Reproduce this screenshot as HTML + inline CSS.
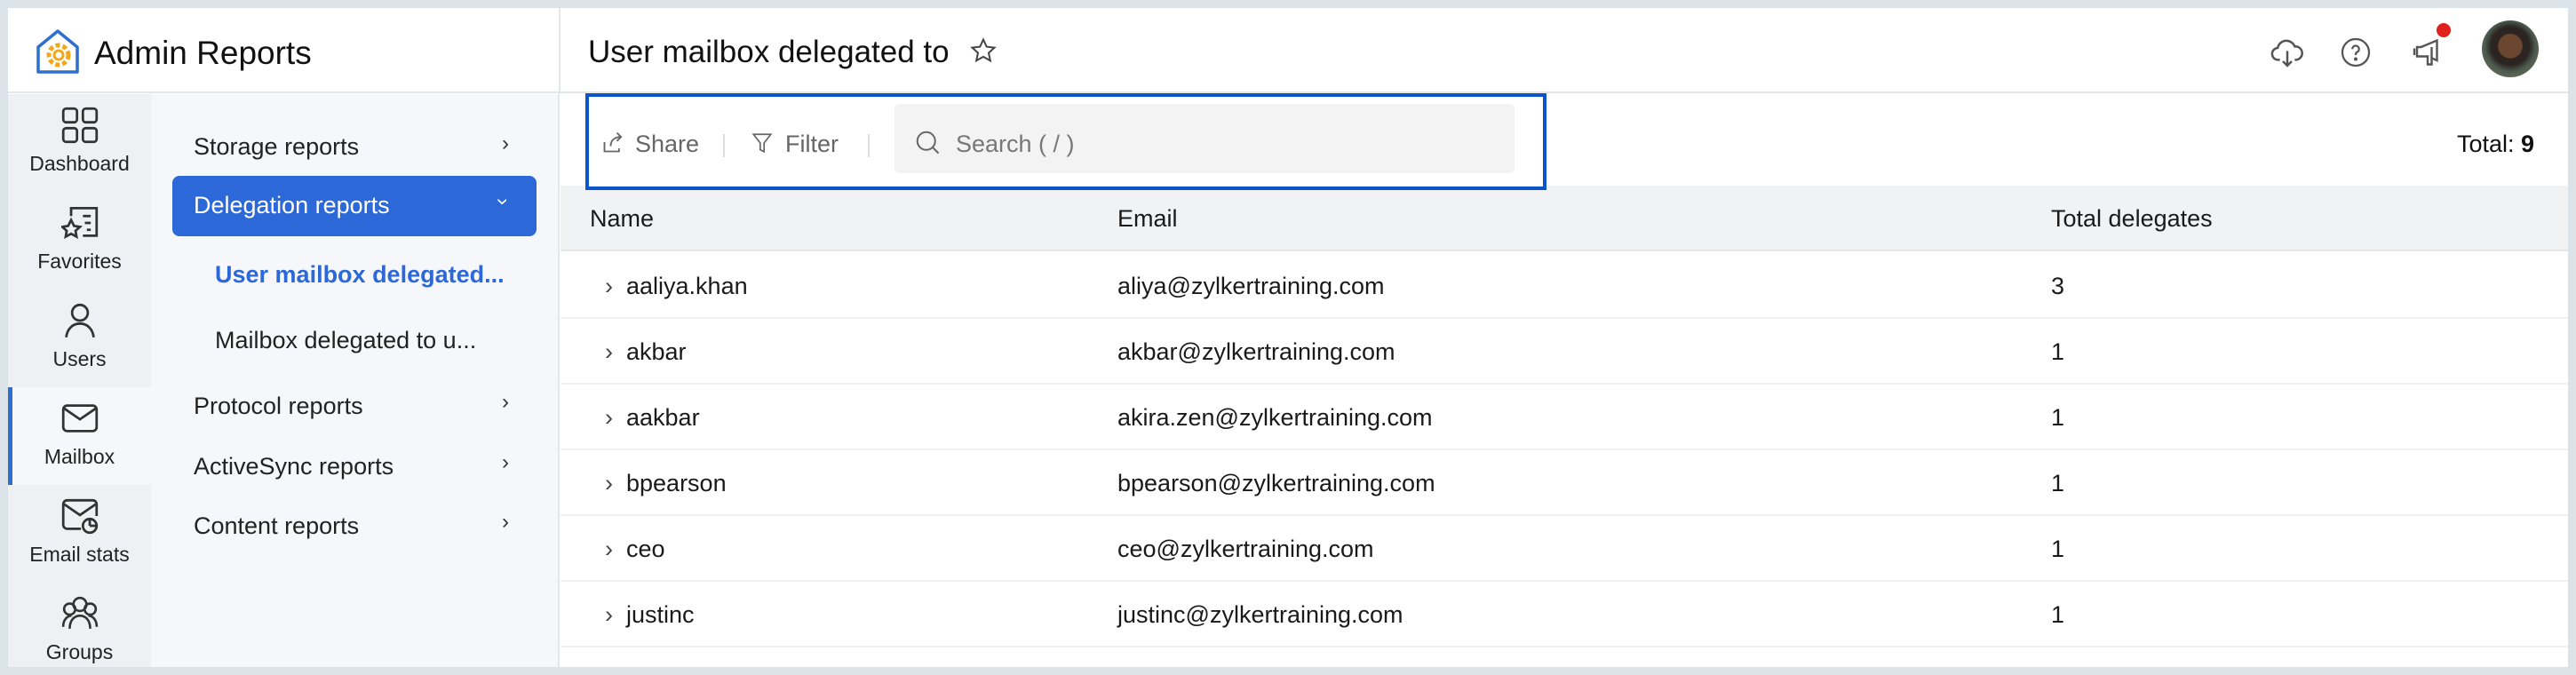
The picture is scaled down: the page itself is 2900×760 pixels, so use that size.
<!DOCTYPE html>
<html><head><meta charset="utf-8"><style>
*{box-sizing:border-box;margin:0;padding:0}
body{width:2900px;height:760px;background:#dce3e8;font-family:"Liberation Sans",sans-serif;color:#1a1a1a;position:relative;overflow:hidden}
.app{position:absolute;left:9px;top:9px;width:2882px;height:742px;background:#fff;overflow:hidden}
.abs{position:absolute}
.hdr{left:0;top:0;width:2882px;height:96px;border-bottom:2px solid #e4e6ea;background:#fff}
.rail{left:0;top:97px;width:161px;height:660px;background:#eef0f3}
.sub{left:161px;top:97px;width:460px;height:660px;background:#f5f7fa;border-right:2px solid #e4e6ea}
.vdiv{left:620px;top:0;width:2px;height:97px;background:#e4e6ea}
.ri{position:absolute;left:0;width:161px;height:110px;text-align:center;font-size:23px;color:#222}
.ri svg{position:absolute;left:60px;top:14px}
.ri span{position:absolute;left:0;right:0;top:65px}
.si{position:absolute;left:48px;font-size:27px;color:#222}
.chev{position:absolute;left:395px;font-size:24px;color:#333}
.row{position:absolute;left:622px;width:2260px;height:74px;border-bottom:2px solid #f0f1f3;font-size:27px}
.row div{position:absolute;top:22px}
</style></head><body>
<div class="app">
<div class="abs hdr"></div>
<div class="abs vdiv"></div>
<svg class="abs" style="left:30px;top:22px" width="52" height="56" viewBox="0 0 52 56"><path d="M4 22 L26 4 L48 22 V50 H4 Z" fill="none" stroke="#2f6fd0" stroke-width="3.5" stroke-linejoin="round"/><circle cx="27" cy="31" r="11" fill="none" stroke="#f2a81d" stroke-width="5" stroke-dasharray="5 3"/><circle cx="27" cy="31" r="5" fill="none" stroke="#f2a81d" stroke-width="3"/></svg>
<div class="abs" style="left:97px;top:30px;font-size:37px;color:#111">Admin Reports</div>

<div class="abs rail">
 <div class="ri" style="top:0"><svg width="42" height="42" viewBox="0 0 38 38" fill="none" stroke="#333" stroke-width="2.5"><rect x="2" y="2" width="14" height="14" rx="3"/><rect x="22" y="2" width="14" height="14" rx="3"/><rect x="2" y="22" width="14" height="14" rx="3"/><rect x="22" y="22" width="14" height="14" rx="3"/></svg><span>Dashboard</span></div>
 <div class="ri" style="top:110px"><svg width="42" height="42" viewBox="0 0 38 38" fill="none" stroke="#333" stroke-width="2.5"><path d="M10 12V4h26v28H22M22 12h8M24 19h6M26 26h4"/><path d="M10 16l3 6 6 1-4.5 4 1 6-5.5-3-5.5 3 1-6L1 23l6-1z"/></svg><span>Favorites</span></div>
 <div class="ri" style="top:220px"><svg width="42" height="42" viewBox="0 0 38 38" fill="none" stroke="#333" stroke-width="2.5"><circle cx="19" cy="11" r="8"/><path d="M5 36c1-9 7-14 14-14s13 5 14 14"/></svg><span>Users</span></div>
 <div class="ri" style="top:330px;background:#f5f7fa"><div class="abs" style="left:0;top:0;width:5px;height:110px;background:#2f6fd0"></div><svg width="42" height="42" viewBox="0 0 38 38" fill="none" stroke="#333" stroke-width="2.5"><rect x="2" y="6" width="34" height="26" rx="4"/><path d="M3 9l16 11 16-11"/></svg><span>Mailbox</span></div>
 <div class="ri" style="top:440px"><svg width="42" height="42" viewBox="0 0 38 38" fill="none" stroke="#333" stroke-width="2.5"><path d="M20 32H6a4 4 0 0 1-4-4V7a4 4 0 0 1 4-4h26a4 4 0 0 1 4 4v12"/><path d="M3 7l16 11 16-11"/><circle cx="29" cy="29" r="7"/><path d="M29 29v-7M29 29h7"/></svg><span>Email stats</span></div>
 <div class="ri" style="top:550px"><svg width="42" height="40" viewBox="0 0 40 38" fill="none" stroke="#333" stroke-width="2.5"><circle cx="20" cy="10" r="7"/><circle cx="9" cy="15" r="6"/><circle cx="31" cy="15" r="6"/><path d="M2 34c0-8 5-12 9-12M38 34c0-8-5-12-9-12M9 36c0-9 5-14 11-14s11 5 11 14"/></svg><span>Groups</span></div>
</div>

<div class="abs sub">
 <div class="si" style="top:44px">Storage reports</div><div class="chev" style="top:42px">›</div>
 <div class="abs" style="left:24px;top:92px;width:410px;height:68px;background:#2d68d9;border-radius:8px"></div>
 <div class="si" style="top:110px;color:#fff">Delegation reports</div><div class="chev" style="top:107px;color:#fff;transform:rotate(90deg);left:392px">›</div>
 <div class="si" style="top:188px;left:72px;color:#2d68d9;font-weight:bold">User mailbox delegated...</div>
 <div class="si" style="top:262px;left:72px">Mailbox delegated to u...</div>
 <div class="si" style="top:336px">Protocol reports</div><div class="chev" style="top:333px">›</div>
 <div class="si" style="top:404px">ActiveSync reports</div><div class="chev" style="top:401px">›</div>
 <div class="si" style="top:471px">Content reports</div><div class="chev" style="top:468px">›</div>
</div>

<div class="abs" style="left:653px;top:30px;font-size:35px;color:#111">User mailbox delegated to</div>
<svg class="abs" style="left:1083px;top:33px" width="30" height="30" viewBox="0 0 24 24" fill="none" stroke="#444" stroke-width="1.6"><path d="M12 2l3 6.5 7 .8-5.2 4.8 1.5 7L12 17.5 5.7 21l1.5-7L2 9.3l7-.8z"/></svg>

<svg class="abs" style="left:2546px;top:30px" width="40" height="40" viewBox="0 0 24 24" fill="none" stroke="#555" stroke-width="1.5"><path d="M7 17H6a4 4 0 0 1-.5-8A6 6 0 0 1 17 8a4.5 4.5 0 0 1 1 9h-1"/><path d="M12 11v10M9 18l3 3 3-3"/></svg>
<svg class="abs" style="left:2625px;top:32px" width="36" height="36" viewBox="0 0 24 24" fill="none" stroke="#555" stroke-width="1.5"><circle cx="12" cy="12" r="10"/><path d="M9.5 9.5a2.5 2.5 0 1 1 3.5 2.3c-.7.4-1 1-1 1.7V14"/><circle cx="12" cy="17" r=".6" fill="#555"/></svg>
<svg class="abs" style="left:2704px;top:32px" width="40" height="36" viewBox="0 0 26 24" fill="none" stroke="#555" stroke-width="1.6"><path d="M3 9v5M5 8h3l12-5v15l-4-1.7V21h-3v-6L8 15H5z"/><path d="M16 16V8"/></svg>
<div class="abs" style="left:2734px;top:17px;width:16px;height:16px;border-radius:50%;background:#e0201d"></div>
<div class="abs" style="left:2785px;top:14px;width:64px;height:64px;border-radius:50%;background:radial-gradient(circle at 50% 45%,#6b4630 0 28%,#2b2420 30% 45%,#4b5a4f 60%,#8a7a5a 100%)"></div>

<svg class="abs" style="left:668px;top:137px" width="28" height="28" viewBox="0 0 24 24" fill="none" stroke="#666" stroke-width="1.6"><path d="M3 12v9h14v-3M9 16c0-6 4-9 10-9M15 3l4 4-4 4"/></svg>
<div class="abs" style="left:706px;top:138px;font-size:27px;color:#666">Share</div>
<div class="abs" style="left:805px;top:142px;width:2px;height:26px;background:#ddd"></div>
<svg class="abs" style="left:836px;top:138px" width="26" height="28" viewBox="0 0 24 24" fill="none" stroke="#666" stroke-width="1.6"><path d="M3 3h18l-7 9v9l-4-2v-7z"/></svg>
<div class="abs" style="left:875px;top:138px;font-size:27px;color:#666">Filter</div>
<div class="abs" style="left:968px;top:142px;width:2px;height:26px;background:#ddd"></div>
<div class="abs" style="left:998px;top:108px;width:698px;height:78px;background:#f3f3f4;border-radius:6px"></div>
<svg class="abs" style="left:1020px;top:135px" width="30" height="32" viewBox="0 0 24 24" fill="none" stroke="#666" stroke-width="1.6"><circle cx="11" cy="11" r="8"/><path d="M17 17l5 5"/></svg>
<div class="abs" style="left:1067px;top:138px;font-size:27px;color:#777">Search ( / )</div>
<div class="abs" style="left:2757px;top:138px;font-size:27px;color:#111">Total: <b>9</b></div>

<div class="abs" style="left:622px;top:200px;width:2260px;height:74px;background:#f1f2f4;border-bottom:2px solid #e6e7ea"></div>
<div class="abs" style="left:655px;top:222px;font-size:27px">Name</div>
<div class="abs" style="left:1249px;top:222px;font-size:27px">Email</div>
<div class="abs" style="left:2300px;top:222px;font-size:27px">Total delegates</div>
<div class="abs" style="left:650px;top:96px;width:1082px;height:109px;border:4px solid #0a56c8"></div>

<div class="row" style="top:276px"><div style="left:50px;color:#444">›</div><div style="left:74px">aaliya.khan</div><div style="left:627px">aliya@zylkertraining.com</div><div style="left:1678px">3</div></div>
<div class="row" style="top:350px"><div style="left:50px;color:#444">›</div><div style="left:74px">akbar</div><div style="left:627px">akbar@zylkertraining.com</div><div style="left:1678px">1</div></div>
<div class="row" style="top:424px"><div style="left:50px;color:#444">›</div><div style="left:74px">aakbar</div><div style="left:627px">akira.zen@zylkertraining.com</div><div style="left:1678px">1</div></div>
<div class="row" style="top:498px"><div style="left:50px;color:#444">›</div><div style="left:74px">bpearson</div><div style="left:627px">bpearson@zylkertraining.com</div><div style="left:1678px">1</div></div>
<div class="row" style="top:572px"><div style="left:50px;color:#444">›</div><div style="left:74px">ceo</div><div style="left:627px">ceo@zylkertraining.com</div><div style="left:1678px">1</div></div>
<div class="row" style="top:646px"><div style="left:50px;color:#444">›</div><div style="left:74px">justinc</div><div style="left:627px">justinc@zylkertraining.com</div><div style="left:1678px">1</div></div>
</div>
</body></html>
